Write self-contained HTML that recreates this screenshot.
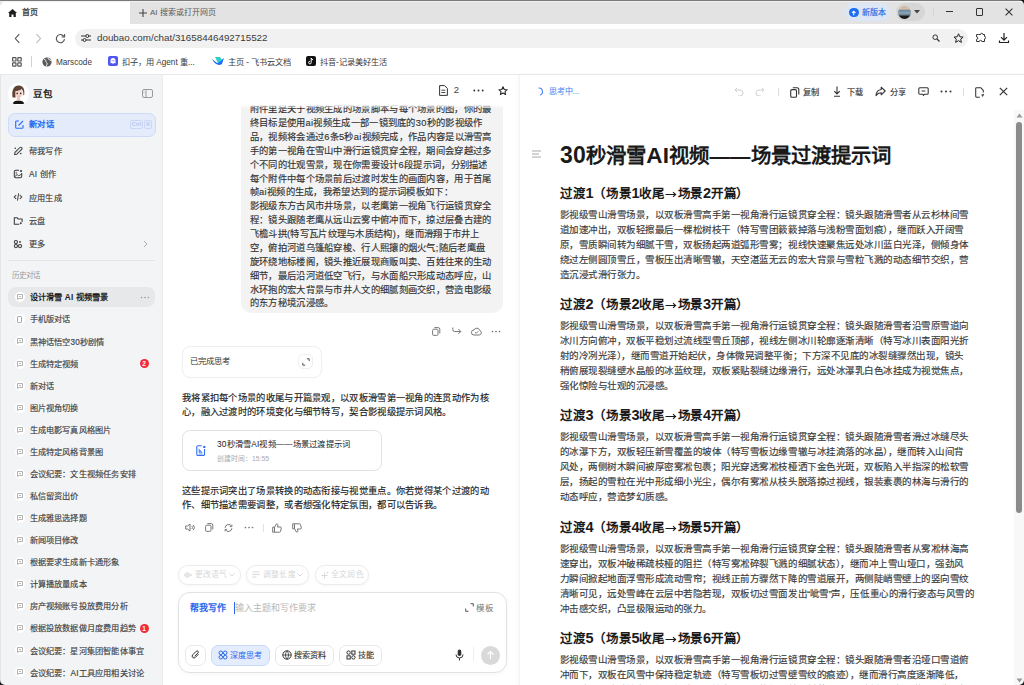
<!DOCTYPE html>
<html lang="zh-CN"><head><meta charset="utf-8">
<style>
*{box-sizing:border-box}
html,body{margin:0;padding:0}
body{width:1024px;height:685px;overflow:hidden;position:relative;background:#fff;font-family:"Liberation Sans",sans-serif;color:#1f1f1f}
.a{position:absolute}
svg{display:block}
.t{white-space:nowrap}
</style></head><body>
<!-- ============ BROWSER CHROME ============ -->
<div class="a" style="left:0;top:0;width:1024px;height:24px;background:#e3e3e3"></div><div class="a" style="left:0;top:0;width:1024px;height:1px;background:#7a7a7a"></div><div class="a" style="left:0;top:1px;width:1024px;height:1px;background:#f2f2f2"></div>
<svg class="a" style="left:1019px;top:0" width="5" height="5" viewBox="0 0 5 5"><path d="M0 0h5v5A5 5 0 0 0 0 0z" fill="#111"/></svg>
<div class="a" style="left:0;top:1.5px;width:129.5px;height:23.5px;background:#fff;border-radius:5px 0 0 0"></div>
<svg class="a" style="left:8px;top:8.5px" width="9" height="8" viewBox="0 0 9 8"><path d="M4.5 0L0 4h1.2v4h2.3V5.5h2V8h2.3V4H9z" fill="#1f1f1f"/></svg>
<div class="a t" style="left:22px;top:7px;font-size:8px;line-height:12px;color:#333;-webkit-text-stroke-width:0.25px">首页</div>
<svg class="a" style="left:138px;top:7.5px" width="10" height="10" viewBox="0 0 10 10"><path d="M5 1v8M1 5h8" stroke="#444" stroke-width="1.1"/></svg>
<div class="a t" style="left:150px;top:7px;font-size:8px;line-height:12px;color:#5a5a5a">AI 搜索或打开网页</div>
<!-- new version pill -->
<div class="a" style="left:844px;top:3px;width:46px;height:18px;border-radius:9px;background:#dde6f5"></div>
<div class="a" style="left:849px;top:7.5px;width:9.5px;height:9.5px;border-radius:50%;background:#1b6ef3"></div>
<svg class="a" style="left:849px;top:7.5px" width="9.5" height="9.5" viewBox="0 0 9.5 9.5"><path d="M4.75 7.3V3.2M3 4.9l1.75-1.7 1.75 1.7" stroke="#fff" stroke-width="1.1" fill="none"/></svg>
<div class="a t" style="left:862px;top:7px;font-size:8px;line-height:12px;color:#2d6ee6;-webkit-text-stroke-width:0.2px">新版本</div>
<div class="a" style="left:896px;top:3px;width:29px;height:18px;border-radius:9px;background:#d6d6d6"></div>
<div class="a" style="left:898.2px;top:5.8px;width:13px;height:13px;border-radius:50%;background:linear-gradient(#c7b39a 0,#d7c2a8 22%,#6f8aa0 35%,#8fa6b8 55%,#6b7f8c 68%,#1c1c1c 80%,#141414 100%)"></div>
<svg class="a" style="left:914px;top:10px" width="6" height="4" viewBox="0 0 6 4"><path d="M0 0h6L3 3.5z" fill="#444"/></svg>
<div class="a" style="left:933px;top:8px;width:1px;height:9px;background:#d6d6d6"></div>
<div class="a" style="left:945.5px;top:10.8px;width:7.5px;height:1.1px;background:#333"></div>
<div class="a" style="left:975.5px;top:8px;width:7.8px;height:7.5px;border:1.1px solid #333;border-radius:1px"></div>
<svg class="a" style="left:1005px;top:7.5px" width="8" height="8" viewBox="0 0 8 8"><path d="M.6.6l6.8 6.8M7.4.6L.6 7.4" stroke="#333" stroke-width="1.1"/></svg>

<!-- address row -->
<svg class="a" style="left:14px;top:33px" width="7" height="11" viewBox="0 0 7 11"><path d="M5.3 1.2L1.3 5.5l4 4.3" stroke="#555" stroke-width="1.1" fill="none"/></svg>
<svg class="a" style="left:35px;top:33px" width="7" height="11" viewBox="0 0 7 11"><path d="M1.5 1.2l4 4.3-4 4.3" stroke="#b8b8b8" stroke-width="1.1" fill="none"/></svg>
<svg class="a" style="left:54.5px;top:33px" width="11" height="11" viewBox="0 0 11 11"><path d="M9 3.6A4.1 4.1 0 1 0 9.5 6.2" stroke="#555" stroke-width="1.15" fill="none"/><path d="M9.6 1v3H6.6" stroke="#555" stroke-width="1.1" fill="none"/></svg>
<div class="a" style="left:75px;top:29px;width:893px;height:19px;border-radius:10px;background:#f1f1f1"></div>
<svg class="a" style="left:81px;top:33px" width="10" height="10" viewBox="0 0 10 10"><path d="M0 3h10M0 7h10" stroke="#333" stroke-width="1"/><circle cx="6.3" cy="3" r="1.5" fill="#f1f1f1" stroke="#333"/><circle cx="3.5" cy="7" r="1.5" fill="#f1f1f1" stroke="#333"/></svg>
<div class="a t" style="left:97px;top:31.2px;font-size:9.8px;line-height:13px;color:#3a3a3a">doubao.com/chat/31658446492715522</div>
<svg class="a" style="left:932px;top:34px" width="8" height="8" viewBox="0 0 8 8"><circle cx="3.2" cy="3.2" r="2.3" stroke="#333" stroke-width="1" fill="none"/><path d="M5 5l2.5 2.5" stroke="#333" stroke-width="1.2"/></svg>
<svg class="a" style="left:953px;top:33px" width="11" height="11" viewBox="0 0 11 11"><path d="M5.5 0.8l1.4 3 3.2.3-2.4 2.1.7 3.2-2.9-1.7-2.9 1.7.7-3.2L1 4.1l3.2-.3z" stroke="#222" stroke-width="1" fill="none" stroke-linejoin="round"/></svg>
<svg class="a" style="left:975px;top:32px" width="11" height="11" viewBox="0 0 11 11"><path d="M3.5 2.5h2a1.2 1.2 0 0 1 2.4 0h1.6v2a1.2 1.2 0 0 1 0 2.4v2.6H6.8a1.2 1.2 0 0 0-2.4 0H1.6V7.3a1.2 1.2 0 0 0 0-2.4V2.5z" stroke="#333" stroke-width="1" fill="none"/></svg>
<svg class="a" style="left:998px;top:32px" width="12" height="12" viewBox="0 0 12 12"><path d="M6 1v7M3 5.2L6 8.2l3-3M1.5 8.5v2h9v-2" stroke="#222" stroke-width="1.2" fill="none"/></svg>

<!-- bookmarks -->
<svg class="a" style="left:12px;top:57px" width="10" height="10" viewBox="0 0 10 10"><rect x="0.6" y="0.6" width="3.4" height="3.4" rx=".6" stroke="#555" stroke-width="1.2" fill="none"/><rect x="5.8" y="0.6" width="3.4" height="3.4" rx=".6" stroke="#555" stroke-width="1.2" fill="none"/><rect x="0.6" y="5.8" width="3.4" height="3.4" rx=".6" stroke="#555" stroke-width="1.2" fill="none"/><rect x="5.8" y="5.8" width="3.4" height="3.4" rx=".6" stroke="#555" stroke-width="1.2" fill="none"/></svg>
<div class="a" style="left:31px;top:56px;width:1px;height:11px;background:#c5d3ea"></div>
<svg class="a" style="left:42px;top:56.5px" width="10" height="10" viewBox="0 0 10 10"><circle cx="5" cy="5" r="4.6" fill="#5a5a5a"/><path d="M2 2.2c1.2.2 2 1 1.8 2-.2.8 1 1.2 1.3 2 .2.8-.3 1.8-.8 2.6M6.2 1c-.2.8.3 1.5 1.1 1.6.8.1 1.5.6 1.6 1.3" stroke="#fff" stroke-width="1" fill="none"/></svg>
<div class="a t" style="left:56px;top:56px;font-size:8.2px;line-height:13px;color:#3a3a3a">Marscode</div>
<div class="a" style="left:108px;top:56px;width:10px;height:10px;border-radius:2px;background:#4f55f0"></div><svg class="a" style="left:108px;top:56px" width="10" height="10" viewBox="0 0 10 10"><path d="M2.5 7.5V4.5a2.5 2.5 0 0 1 5 0v3l-1-.6-1.5.8-1.5-.8z" fill="#fff"/><circle cx="4.2" cy="4.8" r=".5" fill="#4f55f0"/><circle cx="5.8" cy="4.8" r=".5" fill="#4f55f0"/></svg>
<div class="a t" style="left:122px;top:56px;font-size:8.2px;line-height:13px;color:#3a3a3a">扣子，用 Agent 重...</div>
<svg class="a" style="left:212px;top:57px" width="12" height="9" viewBox="0 0 12 9"><path d="M0 2l5 4 7-5-2 6c-3 2-7 1-10-5z" fill="#1e6fff"/><path d="M3 0h5l2 3-4 3z" fill="#2dd1c4"/></svg>
<div class="a t" style="left:228px;top:56px;font-size:8.2px;line-height:13px;color:#3a3a3a">主页 - 飞书云文档</div>
<div class="a" style="left:306px;top:56px;width:10px;height:10px;border-radius:2px;background:#111"></div><svg class="a" style="left:306px;top:56px" width="10" height="10" viewBox="0 0 10 10"><path d="M5.2 2v4.6a1.3 1.3 0 1 1-1.3-1.3M5.2 2c.2 1 .9 1.6 1.9 1.7" stroke="#fff" stroke-width="1" fill="none"/></svg>
<div class="a t" style="left:320px;top:56px;font-size:8.2px;line-height:13px;color:#3a3a3a">抖音-记录美好生活</div>
<div class="a" style="left:0;top:73.5px;width:1024px;height:1.2px;background:#e8e8e8"></div>


<!-- ============ SIDEBAR ============ -->
<div class="a" style="left:0;top:74.7px;width:163px;height:611px;background:#f3f4f6;border-left:1px solid #e4e4e4;border-right:1px solid #ececee"></div>
<div class="a" style="left:7.7px;top:82.7px;width:21px;height:22px;border-radius:50%;background:#fff;overflow:hidden">
 <svg width="21" height="22" viewBox="0 0 21 22"><path d="M4.5 21c.5-2.5 3-3.6 6-3.6s5.4 1.1 6 3.6z" fill="#161616"/><rect x="9" y="13" width="3" height="4.5" fill="#efc4b6"/><ellipse cx="10.8" cy="10" rx="3.9" ry="4.9" fill="#f6d6ca"/><path d="M4.6 14.5C3.6 8 5 2.6 10.6 2.4c4.6-.1 6.4 3.5 5.6 9.5l-.9.4c.3-2.8-.2-5-1.6-6.3-2 1.4-4.5 2-6.2 2-.4 2.4-.2 4.8.2 6.6z" fill="#5e4236"/><ellipse cx="9.2" cy="10.4" rx=".75" ry=".9" fill="#2a2a2a"/><ellipse cx="12.6" cy="10.4" rx=".75" ry=".9" fill="#2a2a2a"/><path d="M10.2 13.2h1.3" stroke="#e48d8d" stroke-width=".8"/></svg>
</div>
<div class="a t" style="left:33px;top:87px;font-size:9.5px;line-height:13px;font-weight:bold;color:#1f1f1f">豆包</div>
<svg class="a" style="left:142px;top:89px" width="11" height="9" viewBox="0 0 11 9"><rect x="0.5" y="0.5" width="10" height="8" rx="1.5" stroke="#9a9a9a" fill="none"/><path d="M4 0.5v8" stroke="#9a9a9a"/><path d="M2 2.5v2" stroke="#c0c0c0"/></svg>
<div class="a" style="left:8px;top:113px;width:148px;height:24px;border-radius:7px;background:#e4ebfa;border:1px solid #cddbf8"></div>
<svg class="a" style="left:14.5px;top:120px" width="9" height="9" viewBox="0 0 9 9"><path d="M4 1H1.5a.8.8 0 0 0-.8.8v5.7c0 .4.4.8.8.8h5.7c.4 0 .8-.4.8-.8V5" stroke="#2c6bf2" stroke-width="1.1" fill="none"/><path d="M3.5 5.5L8 1" stroke="#2c6bf2" stroke-width="1.1"/></svg>
<div class="a t" style="left:29px;top:118px;font-size:8.4px;letter-spacing:0.4px;line-height:13px;font-weight:bold;color:#2a66ee">新对话</div>
<div class="a" style="left:130.2px;top:120.3px;width:12.8px;height:8.3px;border:1px solid #c9d8f6;border-radius:2px;font-size:5.5px;line-height:6.3px;color:#b3c8f3;text-align:center;font-weight:bold">Ctrl</div>
<div class="a" style="left:144.3px;top:120.3px;width:7.7px;height:8.3px;border:1px solid #c9d8f6;border-radius:2px;font-size:5.5px;line-height:6.3px;color:#b3c8f3;text-align:center;font-weight:bold">K</div>
<svg class="a" style="left:12px;top:144.8px" width="12" height="12" viewBox="0 0 12 12"><path d="M2.6 9.6l.4-2.2 4.9-4.9a1.1 1.1 0 0 1 1.6 0l.2.2a1.1 1.1 0 0 1 0 1.6L4.8 9.2z" stroke="#3a3a3a" stroke-width="1.05" fill="none" stroke-linejoin="round"/><circle cx="3.3" cy="3.3" r=".8" fill="#3a3a3a"/><circle cx="8.8" cy="8.6" r=".8" fill="#3a3a3a"/></svg>
<svg class="a" style="left:12px;top:168.0px" width="12" height="12" viewBox="0 0 12 12"><path d="M7 2.3H3.8a1.5 1.5 0 0 0-1.5 1.5v4.4a1.5 1.5 0 0 0 1.5 1.5h4.4a1.5 1.5 0 0 0 1.5-1.5V5" stroke="#3a3a3a" stroke-width="1.05" fill="none"/><path d="M2.8 8.6l2.4-2 1.6 1.2 2.6-1.6" stroke="#3a3a3a" stroke-width=".9" fill="none"/><path d="M4.2 3.8v2.4" stroke="#3a3a3a" stroke-width=".8"/><circle cx="9" cy="3" r="1.1" fill="#3a3a3a"/></svg>
<svg class="a" style="left:12px;top:191.3px" width="12" height="12" viewBox="0 0 12 12"><path d="M4.2 4L2.3 6l1.9 2M7.8 4l1.9 2-1.9 2" stroke="#3a3a3a" stroke-width="1.05" fill="none"/><path d="M6.6 2.4L5.5 9.6" stroke="#3a3a3a" stroke-width="1"/></svg>
<svg class="a" style="left:12px;top:214.5px" width="12" height="12" viewBox="0 0 12 12"><path d="M7.2 9.3H2.3V2.8h2.9l1 1.1h3.9v3.2" stroke="#3a3a3a" stroke-width="1.05" fill="none" stroke-linejoin="round"/><path d="M8.8 7.1l1.2 1.2-1.2 1.2-1.2-1.2z" fill="#3a3a3a"/></svg>
<svg class="a" style="left:12px;top:238.0px" width="12" height="12" viewBox="0 0 12 12"><circle cx="3.9" cy="4.1" r="1.6" stroke="#3a3a3a" stroke-width="1.05" fill="none"/><circle cx="3.9" cy="8.1" r="1.6" stroke="#3a3a3a" stroke-width="1.05" fill="none"/><circle cx="8" cy="8.1" r="1.6" stroke="#3a3a3a" stroke-width="1.05" fill="none"/><circle cx="8" cy="3.9" r=".95" fill="#3a3a3a"/></svg>
<div class="a t" style="left:29px;top:145.00px;font-size:8.2px;letter-spacing:0.2px;line-height:13px;color:#404040;-webkit-text-stroke-width:0.15px">帮我写作</div>
<div class="a t" style="left:29px;top:168.00px;font-size:8.2px;letter-spacing:0.2px;line-height:13px;color:#404040;-webkit-text-stroke-width:0.15px">AI 创作</div>
<div class="a t" style="left:29px;top:191.50px;font-size:8.2px;letter-spacing:0.2px;line-height:13px;color:#404040;-webkit-text-stroke-width:0.15px">应用生成</div>
<div class="a t" style="left:29px;top:214.50px;font-size:8.2px;letter-spacing:0.2px;line-height:13px;color:#404040;-webkit-text-stroke-width:0.15px">云盘</div>
<div class="a t" style="left:29px;top:238.10px;font-size:8.2px;letter-spacing:0.2px;line-height:13px;color:#404040;-webkit-text-stroke-width:0.15px">更多</div>
<svg class="a" style="left:143px;top:240px" width="5" height="8" viewBox="0 0 5 8"><path d="M1 1l3 3-3 3" stroke="#aaa" stroke-width="1" fill="none"/></svg>
<div class="a" style="left:8px;top:259.5px;width:147px;height:1px;background:#e3e4e7"></div>
<div class="a t" style="left:12px;top:270px;font-size:7.5px;line-height:11px;color:#9a9a9a">历史对话</div>
<div class="a" style="left:8px;top:287px;width:147px;height:20px;border-radius:8px;background:#e7e8ea"></div>
<div class="a" style="left:14.5px;top:292.30px;width:10px;height:10px;border-radius:50%;background:#fff"></div><svg class="a" style="left:16.5px;top:294.30px" width="6" height="6" viewBox="0 0 6 6"><path d="M.5.5h5v4H2L.5 5.5z" stroke="#aaa" fill="none" stroke-width=".9" stroke-linejoin="round"/><path d="M2 2.5h2" stroke="#aaa" stroke-width=".8"/></svg><div class="a t" style="left:29.5px;top:291.40px;font-size:8.2px;letter-spacing:0.2px;line-height:13px;font-weight:bold;color:#1f1f1f">设计滑雪 AI 视频雪景</div>
<div class="a" style="left:14.5px;top:314.37px;width:10px;height:10px;border-radius:50%;background:#fff"></div><svg class="a" style="left:17px;top:315.87px" width="5" height="7" viewBox="0 0 5 7"><rect x=".5" y=".5" width="4" height="6" rx=".8" stroke="#999" fill="none" stroke-width=".9"/></svg><div class="a t" style="left:29.5px;top:313.47px;font-size:8.2px;letter-spacing:0.2px;line-height:13px;color:#404040;-webkit-text-stroke-width:0.15px">手机版对话</div>
<div class="a" style="left:14.5px;top:336.44px;width:10px;height:10px;border-radius:50%;background:#fff"></div><svg class="a" style="left:16.5px;top:338.44px" width="6" height="6" viewBox="0 0 6 6"><path d="M.5.5h5v4H2L.5 5.5z" stroke="#aaa" fill="none" stroke-width=".9" stroke-linejoin="round"/><path d="M2 2.5h2" stroke="#aaa" stroke-width=".8"/></svg><div class="a t" style="left:29.5px;top:335.54px;font-size:8.2px;letter-spacing:0.2px;line-height:13px;color:#404040;-webkit-text-stroke-width:0.15px">黑神话悟空30秒剧情</div>
<div class="a" style="left:14.5px;top:358.51px;width:10px;height:10px;border-radius:50%;background:#fff"></div><svg class="a" style="left:16.5px;top:360.51px" width="6" height="6" viewBox="0 0 6 6"><path d="M.5.5h5v4H2L.5 5.5z" stroke="#aaa" fill="none" stroke-width=".9" stroke-linejoin="round"/><path d="M2 2.5h2" stroke="#aaa" stroke-width=".8"/></svg><div class="a t" style="left:29.5px;top:357.61px;font-size:8.2px;letter-spacing:0.2px;line-height:13px;color:#404040;-webkit-text-stroke-width:0.15px">生成特定视频</div>
<div class="a" style="left:14.5px;top:380.58px;width:10px;height:10px;border-radius:50%;background:#fff"></div><svg class="a" style="left:16.5px;top:382.58px" width="6" height="6" viewBox="0 0 6 6"><path d="M.5.5h5v4H2L.5 5.5z" stroke="#aaa" fill="none" stroke-width=".9" stroke-linejoin="round"/><path d="M2 2.5h2" stroke="#aaa" stroke-width=".8"/></svg><div class="a t" style="left:29.5px;top:379.68px;font-size:8.2px;letter-spacing:0.2px;line-height:13px;color:#404040;-webkit-text-stroke-width:0.15px">新对话</div>
<div class="a" style="left:14.5px;top:402.65px;width:10px;height:10px;border-radius:50%;background:#fff"></div><svg class="a" style="left:16.5px;top:404.65px" width="6" height="6" viewBox="0 0 6 6"><path d="M.5.5h5v4H2L.5 5.5z" stroke="#aaa" fill="none" stroke-width=".9" stroke-linejoin="round"/><path d="M2 2.5h2" stroke="#aaa" stroke-width=".8"/></svg><div class="a t" style="left:29.5px;top:401.75px;font-size:8.2px;letter-spacing:0.2px;line-height:13px;color:#404040;-webkit-text-stroke-width:0.15px">图片视角切换</div>
<div class="a" style="left:14.5px;top:424.72px;width:10px;height:10px;border-radius:50%;background:#fff"></div><svg class="a" style="left:16.5px;top:426.72px" width="6" height="6" viewBox="0 0 6 6"><path d="M.5.5h5v4H2L.5 5.5z" stroke="#aaa" fill="none" stroke-width=".9" stroke-linejoin="round"/><path d="M2 2.5h2" stroke="#aaa" stroke-width=".8"/></svg><div class="a t" style="left:29.5px;top:423.82px;font-size:8.2px;letter-spacing:0.2px;line-height:13px;color:#404040;-webkit-text-stroke-width:0.15px">生成电影写真风格图片</div>
<div class="a" style="left:14.5px;top:446.79px;width:10px;height:10px;border-radius:50%;background:#fff"></div><svg class="a" style="left:16.5px;top:448.79px" width="6" height="6" viewBox="0 0 6 6"><path d="M.5.5h5v4H2L.5 5.5z" stroke="#aaa" fill="none" stroke-width=".9" stroke-linejoin="round"/><path d="M2 2.5h2" stroke="#aaa" stroke-width=".8"/></svg><div class="a t" style="left:29.5px;top:445.89px;font-size:8.2px;letter-spacing:0.2px;line-height:13px;color:#404040;-webkit-text-stroke-width:0.15px">生成特定风格背景图</div>
<div class="a" style="left:14.5px;top:468.86px;width:10px;height:10px;border-radius:50%;background:#fff"></div><svg class="a" style="left:16.5px;top:470.86px" width="6" height="6" viewBox="0 0 6 6"><path d="M.5.5h5v4H2L.5 5.5z" stroke="#aaa" fill="none" stroke-width=".9" stroke-linejoin="round"/><path d="M2 2.5h2" stroke="#aaa" stroke-width=".8"/></svg><div class="a t" style="left:29.5px;top:467.96px;font-size:8.2px;letter-spacing:0.2px;line-height:13px;color:#404040;-webkit-text-stroke-width:0.15px">会议纪要：文生视频任务安排</div>
<div class="a" style="left:14.5px;top:490.93px;width:10px;height:10px;border-radius:50%;background:#fff"></div><svg class="a" style="left:16.5px;top:492.93px" width="6" height="6" viewBox="0 0 6 6"><path d="M.5.5h5v4H2L.5 5.5z" stroke="#aaa" fill="none" stroke-width=".9" stroke-linejoin="round"/><path d="M2 2.5h2" stroke="#aaa" stroke-width=".8"/></svg><div class="a t" style="left:29.5px;top:490.03px;font-size:8.2px;letter-spacing:0.2px;line-height:13px;color:#404040;-webkit-text-stroke-width:0.15px">私信留资出价</div>
<div class="a" style="left:14.5px;top:513.00px;width:10px;height:10px;border-radius:50%;background:#fff"></div><svg class="a" style="left:16.5px;top:515.00px" width="6" height="6" viewBox="0 0 6 6"><path d="M.5.5h5v4H2L.5 5.5z" stroke="#aaa" fill="none" stroke-width=".9" stroke-linejoin="round"/><path d="M2 2.5h2" stroke="#aaa" stroke-width=".8"/></svg><div class="a t" style="left:29.5px;top:512.10px;font-size:8.2px;letter-spacing:0.2px;line-height:13px;color:#404040;-webkit-text-stroke-width:0.15px">生成雅思选择题</div>
<div class="a" style="left:14.5px;top:535.07px;width:10px;height:10px;border-radius:50%;background:#fff"></div><svg class="a" style="left:16.5px;top:537.07px" width="6" height="6" viewBox="0 0 6 6"><path d="M.5.5h5v4H2L.5 5.5z" stroke="#aaa" fill="none" stroke-width=".9" stroke-linejoin="round"/><path d="M2 2.5h2" stroke="#aaa" stroke-width=".8"/></svg><div class="a t" style="left:29.5px;top:534.17px;font-size:8.2px;letter-spacing:0.2px;line-height:13px;color:#404040;-webkit-text-stroke-width:0.15px">新闻项目修改</div>
<div class="a" style="left:14.5px;top:557.14px;width:10px;height:10px;border-radius:50%;background:#fff"></div><svg class="a" style="left:16.5px;top:559.14px" width="6" height="6" viewBox="0 0 6 6"><path d="M.5.5h5v4H2L.5 5.5z" stroke="#aaa" fill="none" stroke-width=".9" stroke-linejoin="round"/><path d="M2 2.5h2" stroke="#aaa" stroke-width=".8"/></svg><div class="a t" style="left:29.5px;top:556.24px;font-size:8.2px;letter-spacing:0.2px;line-height:13px;color:#404040;-webkit-text-stroke-width:0.15px">根据要求生成新卡通形象</div>
<div class="a" style="left:14.5px;top:579.21px;width:10px;height:10px;border-radius:50%;background:#fff"></div><svg class="a" style="left:16.5px;top:581.21px" width="6" height="6" viewBox="0 0 6 6"><path d="M.5.5h5v4H2L.5 5.5z" stroke="#aaa" fill="none" stroke-width=".9" stroke-linejoin="round"/><path d="M2 2.5h2" stroke="#aaa" stroke-width=".8"/></svg><div class="a t" style="left:29.5px;top:578.31px;font-size:8.2px;letter-spacing:0.2px;line-height:13px;color:#404040;-webkit-text-stroke-width:0.15px">计算播放量成本</div>
<div class="a" style="left:14.5px;top:601.28px;width:10px;height:10px;border-radius:50%;background:#fff"></div><svg class="a" style="left:16.5px;top:603.28px" width="6" height="6" viewBox="0 0 6 6"><path d="M.5.5h5v4H2L.5 5.5z" stroke="#aaa" fill="none" stroke-width=".9" stroke-linejoin="round"/><path d="M2 2.5h2" stroke="#aaa" stroke-width=".8"/></svg><div class="a t" style="left:29.5px;top:600.38px;font-size:8.2px;letter-spacing:0.2px;line-height:13px;color:#404040;-webkit-text-stroke-width:0.15px">房产视频账号投放费用分析</div>
<div class="a" style="left:14.5px;top:623.35px;width:10px;height:10px;border-radius:50%;background:#fff"></div><svg class="a" style="left:16.5px;top:625.35px" width="6" height="6" viewBox="0 0 6 6"><path d="M.5.5h5v4H2L.5 5.5z" stroke="#aaa" fill="none" stroke-width=".9" stroke-linejoin="round"/><path d="M2 2.5h2" stroke="#aaa" stroke-width=".8"/></svg><div class="a t" style="left:29.5px;top:622.45px;font-size:8.2px;letter-spacing:0.2px;line-height:13px;color:#404040;-webkit-text-stroke-width:0.15px">根据投放数据做月度费用趋势</div>
<div class="a" style="left:14.5px;top:645.42px;width:10px;height:10px;border-radius:50%;background:#fff"></div><svg class="a" style="left:16.5px;top:647.42px" width="6" height="6" viewBox="0 0 6 6"><path d="M.5.5h5v4H2L.5 5.5z" stroke="#aaa" fill="none" stroke-width=".9" stroke-linejoin="round"/><path d="M2 2.5h2" stroke="#aaa" stroke-width=".8"/></svg><div class="a t" style="left:29.5px;top:644.52px;font-size:8.2px;letter-spacing:0.2px;line-height:13px;color:#404040;-webkit-text-stroke-width:0.15px">会议纪要：星河集团智能体事宜</div>
<div class="a" style="left:14.5px;top:667.49px;width:10px;height:10px;border-radius:50%;background:#fff"></div><svg class="a" style="left:16.5px;top:669.49px" width="6" height="6" viewBox="0 0 6 6"><path d="M.5.5h5v4H2L.5 5.5z" stroke="#aaa" fill="none" stroke-width=".9" stroke-linejoin="round"/><path d="M2 2.5h2" stroke="#aaa" stroke-width=".8"/></svg><div class="a t" style="left:29.5px;top:666.59px;font-size:8.2px;letter-spacing:0.2px;line-height:13px;color:#404040;-webkit-text-stroke-width:0.15px">会议纪要：AI工具应用相关讨论</div>
<svg class="a" style="left:139.5px;top:295.8px" width="10" height="3" viewBox="0 0 10 3"><circle cx="1.6" cy="1.5" r=".8" fill="#999"/><circle cx="5" cy="1.5" r=".8" fill="#999"/><circle cx="8.4" cy="1.5" r=".8" fill="#999"/></svg>
<div class="a" style="left:139.5px;top:358.7px;width:9px;height:9px;border-radius:50%;background:#f42a35;color:#fff;font-size:6.5px;line-height:9px;text-align:center;font-weight:bold">2</div>
<div class="a" style="left:139.5px;top:624.0px;width:9px;height:9px;border-radius:50%;background:#f42a35;color:#fff;font-size:6.5px;line-height:9px;text-align:center;font-weight:bold">1</div>


<!-- ============ MIDDLE CHAT ============ -->
<div class="a" style="left:241.3px;top:98px;width:261.3px;height:215px;border-radius:10px;background:#f3f3f3"></div>
<div class="a t" style="left:249.8px;top:102.10px;font-size:9.3px;letter-spacing:0.3px;line-height:14px;color:#333;-webkit-text-stroke-width:0.15px">附件里是关于视频生成的场景脚本与每个场景的图，你的最</div>
<div class="a t" style="left:249.8px;top:115.98px;font-size:9.3px;letter-spacing:0.3px;line-height:14px;color:#333;-webkit-text-stroke-width:0.15px">终目标是使用ai视频生成一部一镜到底的30秒的影视级作</div>
<div class="a t" style="left:249.8px;top:129.86px;font-size:9.3px;letter-spacing:0.3px;line-height:14px;color:#333;-webkit-text-stroke-width:0.15px">品，视频将会通过6条5秒ai视频完成，作品内容是以滑雪高</div>
<div class="a t" style="left:249.8px;top:143.74px;font-size:9.3px;letter-spacing:0.3px;line-height:14px;color:#333;-webkit-text-stroke-width:0.15px">手的第一视角在雪山中滑行运镜贯穿全程，期间会穿越过多</div>
<div class="a t" style="left:249.8px;top:157.62px;font-size:9.3px;letter-spacing:0.3px;line-height:14px;color:#333;-webkit-text-stroke-width:0.15px">个不同的壮观雪景，现在你需要设计6段提示词，分别描述</div>
<div class="a t" style="left:249.8px;top:171.50px;font-size:9.3px;letter-spacing:0.3px;line-height:14px;color:#333;-webkit-text-stroke-width:0.15px">每个附件中每个场景前后过渡时发生的画面内容，用于首尾</div>
<div class="a t" style="left:249.8px;top:185.38px;font-size:9.3px;letter-spacing:0.3px;line-height:14px;color:#333;-webkit-text-stroke-width:0.15px">帧ai视频的生成，我希望达到的提示词模板如下：</div>
<div class="a t" style="left:249.8px;top:199.26px;font-size:9.3px;letter-spacing:0.3px;line-height:14px;color:#333;-webkit-text-stroke-width:0.15px">影视级东方古风市井场景，以老鹰第一视角飞行运镜贯穿全</div>
<div class="a t" style="left:249.8px;top:213.14px;font-size:9.3px;letter-spacing:0.3px;line-height:14px;color:#333;-webkit-text-stroke-width:0.15px">程：镜头跟随老鹰从远山云雾中俯冲而下，掠过层叠古建的</div>
<div class="a t" style="left:249.8px;top:227.02px;font-size:9.3px;letter-spacing:0.3px;line-height:14px;color:#333;-webkit-text-stroke-width:0.15px">飞檐斗拱(特写瓦片纹理与木质结构)，继而滑翔于市井上</div>
<div class="a t" style="left:249.8px;top:240.90px;font-size:9.3px;letter-spacing:0.3px;line-height:14px;color:#333;-webkit-text-stroke-width:0.15px">空，俯拍河道乌篷船穿梭、行人熙攘的烟火气;随后老鹰盘</div>
<div class="a t" style="left:249.8px;top:254.78px;font-size:9.3px;letter-spacing:0.3px;line-height:14px;color:#333;-webkit-text-stroke-width:0.15px">旋环绕地标楼阁，镜头推近展现商贩叫卖、百姓往来的生动</div>
<div class="a t" style="left:249.8px;top:268.66px;font-size:9.3px;letter-spacing:0.3px;line-height:14px;color:#333;-webkit-text-stroke-width:0.15px">细节，最后沿河道低空飞行，与水面船只形成动态呼应，山</div>
<div class="a t" style="left:249.8px;top:282.54px;font-size:9.3px;letter-spacing:0.3px;line-height:14px;color:#333;-webkit-text-stroke-width:0.15px">水环抱的宏大背景与市井人文的细腻刻画交织，营造电影级</div>
<div class="a t" style="left:249.8px;top:296.42px;font-size:9.3px;letter-spacing:0.3px;line-height:14px;color:#333;-webkit-text-stroke-width:0.15px">的东方秘境沉浸感。</div>
<div class="a" style="left:163px;top:74.7px;width:356px;height:30.3px;background:#fff"></div>
<div class="a" style="left:163px;top:105px;width:356px;height:3px;background:linear-gradient(#fff,rgba(255,255,255,0))"></div>
<svg class="a" style="left:439px;top:85px" width="9" height="11" viewBox="0 0 9 11"><path d="M.6.6h5l2.8 2.8v7H.6z" stroke="#333" stroke-width="1" fill="none" stroke-linejoin="round"/><path d="M2.3 5.2h4M2.3 7.5h4" stroke="#333" stroke-width=".9"/></svg>
<div class="a t" style="left:453.8px;top:84.2px;font-size:9.5px;line-height:12px;color:#444">2</div>
<svg class="a" style="left:473px;top:89px" width="11" height="3" viewBox="0 0 11 3"><circle cx="1.3" cy="1.5" r=".95" fill="#333"/><circle cx="5.5" cy="1.5" r=".95" fill="#333"/><circle cx="9.7" cy="1.5" r=".95" fill="#333"/></svg>
<svg class="a" style="left:498px;top:85.5px" width="10" height="10" viewBox="0 0 11 11"><path d="M5.5 0.8l1.4 3 3.2.3-2.4 2.1.7 3.2-2.9-1.7-2.9 1.7.7-3.2L1 4.1l3.2-.3z" stroke="#222" stroke-width="1.15" fill="none" stroke-linejoin="round"/></svg>
<svg class="a" style="left:432px;top:327px" width="9" height="9" viewBox="0 0 9 9"><rect x=".6" y="2.2" width="5.4" height="6.2" rx="1.2" stroke="#777" stroke-width="1" fill="none"/><path d="M2.4 .6h3.8a1.6 1.6 0 0 1 1.6 1.6v4.2" stroke="#777" stroke-width="1" fill="none"/></svg>
<svg class="a" style="left:451.5px;top:327.3px" width="10" height="8" viewBox="0 0 10 8"><path d="M.8.5v2.3A1.7 1.7 0 0 0 2.5 4.5h6.2M6.3 2l2.5 2.5L6.3 7" stroke="#777" stroke-width="1" fill="none"/></svg>
<svg class="a" style="left:470.5px;top:326.5px" width="11" height="9" viewBox="0 0 11 9"><path d="M2.8 8h5.4a2.3 2.3 0 0 0 .5-4.5A3 3 0 0 0 3 3 2.5 2.5 0 0 0 2.8 8z" stroke="#777" stroke-width="1" fill="none"/><path d="M4 5.2l1.2 1.1 2-2" stroke="#777" stroke-width="1" fill="none"/></svg>
<svg class="a" style="left:491px;top:330px" width="10" height="3" viewBox="0 0 10 3"><circle cx="1.5" cy="1.5" r=".85" fill="#777"/><circle cx="5" cy="1.5" r=".85" fill="#777"/><circle cx="8.5" cy="1.5" r=".85" fill="#777"/></svg>
<div class="a" style="left:182.3px;top:346.4px;width:139.4px;height:31.2px;border-radius:8px;border:1px solid #eeeeee;background:#fff"></div>
<div class="a t" style="left:190px;top:354.5px;font-size:8.3px;letter-spacing:0px;line-height:13px;color:#333">已完成思考</div>
<div class="a" style="left:298px;top:354px;width:15px;height:15px;border-radius:5px;border:1px solid #efefef;background:#fff"></div>
<svg class="a" style="left:301.5px;top:357.5px" width="8" height="8" viewBox="0 0 8 8"><path d="M4.8.8h2.4v2.4M3.2 7.2H.8V4.8" stroke="#555" stroke-width="1" fill="none"/></svg>
<div class="a t" style="left:182px;top:390.70px;font-size:9.3px;letter-spacing:0.3px;line-height:14px;color:#222;-webkit-text-stroke-width:0.15px">我将紧扣每个场景的收尾与开篇景观，以双板滑雪第一视角的连贯动作为核</div>
<div class="a t" style="left:182px;top:405.20px;font-size:9.3px;letter-spacing:0.3px;line-height:14px;color:#222;-webkit-text-stroke-width:0.15px">心，融入过渡时的环境变化与细节特写，契合影视级提示词风格。</div>
<div class="a" style="left:182.3px;top:429.6px;width:200px;height:41.6px;border-radius:8px;border:1px solid #e3e3e3;background:#fff"></div>
<svg class="a" style="left:196.3px;top:445px" width="11" height="11" viewBox="0 0 11 11"><path d="M5.8 .8H2A1.2 1.2 0 0 0 .8 2v7.3A1.2 1.2 0 0 0 2 10.5h5.3a1.2 1.2 0 0 0 1.2-1.2V4" stroke="#2f6ff5" stroke-width="1.1" fill="none"/><path d="M2.6 3.2v4.6h4.2z" fill="#5c8ff7"/><path d="M2.6 9h4" stroke="#2f6ff5" stroke-width=".8"/><circle cx="8.3" cy="1.9" r="1.2" fill="#2f6ff5"/></svg>
<div class="a t" style="left:217px;top:437.5px;font-size:8.3px;letter-spacing:0.2px;line-height:13px;color:#222">30秒滑雪AI视频——场景过渡提示词</div>
<div class="a t" style="left:217px;top:453.5px;font-size:6.8px;line-height:10px;color:#aaa">创建时间：15:55</div>
<div class="a t" style="left:182px;top:484.20px;font-size:9.3px;letter-spacing:0.3px;line-height:14px;color:#222;-webkit-text-stroke-width:0.15px">这些提示词突出了场景转换的动态衔接与视觉重点。你若觉得某个过渡的动</div>
<div class="a t" style="left:182px;top:498.10px;font-size:9.3px;letter-spacing:0.3px;line-height:14px;color:#222;-webkit-text-stroke-width:0.15px">作、细节描述需要调整，或者想强化特定氛围，都可以告诉我。</div>
<svg class="a" style="left:184.5px;top:523px" width="10" height="9" viewBox="0 0 10 9"><path d="M.7 3h1.8L5 1v7L2.5 6H.7z" stroke="#777" fill="none" stroke-linejoin="round"/><path d="M6.8 3a2 2 0 0 1 0 3M8.2 1.8a3.8 3.8 0 0 1 0 5.4" stroke="#777" fill="none"/></svg>
<svg class="a" style="left:205px;top:523px" width="9" height="9" viewBox="0 0 9 9"><rect x=".6" y="2.2" width="5.4" height="6.2" rx="1.2" stroke="#777" stroke-width="1" fill="none"/><path d="M2.4 .6h3.8a1.6 1.6 0 0 1 1.6 1.6v4.2" stroke="#777" stroke-width="1" fill="none"/></svg>
<svg class="a" style="left:224px;top:522.5px" width="9" height="10" viewBox="0 0 9 10"><path d="M7.9 5.2A3.5 3.5 0 0 1 1.3 6.6M1.1 4.8A3.5 3.5 0 0 1 7.7 3.4" stroke="#777" fill="none"/><path d="M7.9 1.6v2H5.9M1.1 8.4v-2h2" stroke="#777" fill="none" stroke-width=".9"/></svg>
<svg class="a" style="left:243.5px;top:526px" width="10" height="3" viewBox="0 0 10 3"><circle cx="1.5" cy="1.5" r=".85" fill="#777"/><circle cx="5" cy="1.5" r=".85" fill="#777"/><circle cx="8.5" cy="1.5" r=".85" fill="#777"/></svg>
<div class="a" style="left:262.5px;top:523.5px;width:1px;height:8px;background:#e2e2e2"></div>
<svg class="a" style="left:272px;top:522.5px" width="10" height="10" viewBox="0 0 10 10"><path d="M.7 4.2h1.8v5H.7zM2.5 4.2L4.6.8c.9 0 1.4.6 1.2 1.5L5.4 4h3c.6 0 1 .5.9 1.1l-.8 3.3c-.1.5-.5.8-1 .8H2.5" stroke="#777" fill="none" stroke-linejoin="round"/></svg>
<svg class="a" style="left:292px;top:522.5px" width="10" height="10" viewBox="0 0 10 10"><path d="M.7 5.8h1.8V.8H.7zM2.5 5.8L4.6 9.2c.9 0 1.4-.6 1.2-1.5L5.4 6h3c.6 0 1-.5.9-1.1L8.5 1.6C8.4 1.1 8 .8 7.5.8H2.5" stroke="#777" fill="none" stroke-linejoin="round"/></svg>
<div class="a" style="left:163px;top:540px;width:356px;height:145px;background:linear-gradient(rgba(255,255,255,0),#fff 16px)"></div>
<div class="a" style="left:178.2px;top:565px;width:63px;height:20px;border-radius:10px;border:1px solid #ececec;background:#fff;box-shadow:0 1px 3px rgba(0,0,0,0.04)"></div>
<svg class="a" style="left:184px;top:571px" width="8" height="8" viewBox="0 0 8 8"><path d="M1 2.5v3M3 1v6M5 2v4M7 3v2" stroke="#d8d8d8" stroke-width="1.3"/></svg>
<div class="a t" style="left:194.5px;top:568.5px;font-size:7.8px;letter-spacing:0.2px;line-height:12px;color:#d6d6d6">更改语气</div>
<svg class="a" style="left:229px;top:573px" width="6" height="4" viewBox="0 0 6 4"><path d="M.5.5L3 3 5.5.5" stroke="#d8d8d8" fill="none"/></svg>
<div class="a" style="left:245.8px;top:565px;width:63.7px;height:20px;border-radius:10px;border:1px solid #ececec;background:#fff;box-shadow:0 1px 3px rgba(0,0,0,0.04)"></div>
<svg class="a" style="left:252px;top:571px" width="8" height="8" viewBox="0 0 8 8"><path d="M.5 1h7M.5 3.5h7M.5 6h4" stroke="#d8d8d8" stroke-width="1"/></svg>
<div class="a t" style="left:263px;top:568.5px;font-size:7.8px;letter-spacing:0.2px;line-height:12px;color:#d6d6d6">调整长度</div>
<svg class="a" style="left:297px;top:573px" width="6" height="4" viewBox="0 0 6 4"><path d="M.5.5L3 3 5.5.5" stroke="#d8d8d8" fill="none"/></svg>
<div class="a" style="left:314.7px;top:565px;width:54px;height:20px;border-radius:10px;border:1px solid #ececec;background:#fff;box-shadow:0 1px 3px rgba(0,0,0,0.04)"></div>
<svg class="a" style="left:321px;top:570.5px" width="8" height="8" viewBox="0 0 8 8"><path d="M3.5 1.5v6M.5 4.5h6" stroke="#d8d8d8" stroke-width="1"/><path d="M6.5 .5v2M5.5 1.5h2" stroke="#d8d8d8" stroke-width=".8"/></svg>
<div class="a t" style="left:331px;top:568.5px;font-size:7.8px;letter-spacing:0.2px;line-height:12px;color:#d6d6d6">全文润色</div>
<div class="a" style="left:178.2px;top:592px;width:329.3px;height:81.4px;border-radius:12px;border:1px solid #e2e2e2;background:#fff;box-shadow:0 1px 4px rgba(0,0,0,0.04)"></div>
<div class="a t" style="left:190px;top:602px;font-size:9px;line-height:13px;font-weight:bold;color:#2a66ee">帮我写作</div>
<div class="a" style="left:233.5px;top:602px;width:1px;height:12px;background:#2a66ee"></div>
<div class="a t" style="left:235px;top:602px;font-size:9px;line-height:13px;color:#b8b8b8">输入主题和写作要求</div>
<svg class="a" style="left:465px;top:603px" width="9" height="9" viewBox="0 0 9 9"><path d="M5.5.7h2.8v2.8M3.5 8.3H.7V5.5" stroke="#555" stroke-width="1" fill="none"/></svg>
<div class="a t" style="left:476px;top:602px;font-size:8.5px;line-height:13px;color:#777">模板</div>
<div class="a" style="left:185px;top:644.5px;width:21px;height:21px;border-radius:7px;border:1px solid #e8e8e8;background:#fff"></div>
<svg class="a" style="left:190.5px;top:650px" width="10" height="10" viewBox="0 0 10 10"><path d="M7.5 4.2L4.3 7.4a1.8 1.8 0 0 1-2.6-2.6L5.3 1.2a1.2 1.2 0 0 1 1.7 1.7L3.6 6.3" stroke="#333" stroke-width="1" fill="none"/></svg>
<div class="a" style="left:210.7px;top:644.5px;width:59px;height:21px;border-radius:7px;border:1px solid #c9daf8;background:#e4edfd"></div>
<svg class="a" style="left:218px;top:650px" width="10" height="10" viewBox="0 0 10 10"><circle cx="2.8" cy="2.8" r="1.8" stroke="#2a66ee" fill="none"/><circle cx="7.2" cy="2.8" r="1.8" stroke="#2a66ee" fill="none"/><circle cx="2.8" cy="7.2" r="1.8" stroke="#2a66ee" fill="none"/><circle cx="7.2" cy="7.2" r="1.8" stroke="#2a66ee" fill="none"/></svg>
<div class="a t" style="left:230px;top:649px;font-size:8.1px;letter-spacing:0.1px;line-height:13px;color:#2a66ee">深度思考</div>
<div class="a" style="left:274.9px;top:644.5px;width:59px;height:21px;border-radius:7px;border:1px solid #e8e8e8;background:#fff"></div>
<svg class="a" style="left:282px;top:650px" width="10" height="10" viewBox="0 0 10 10"><circle cx="5" cy="5" r="4.2" stroke="#333" fill="none"/><path d="M.8 5h8.4M5 .8c-2 2.5-2 5.9 0 8.4M5 .8c2 2.5 2 5.9 0 8.4" stroke="#333" stroke-width=".8" fill="none"/></svg>
<div class="a t" style="left:294px;top:649px;font-size:8.1px;letter-spacing:0.1px;line-height:13px;color:#333;-webkit-text-stroke-width:0.12px">搜索资料</div>
<div class="a" style="left:339px;top:644.5px;width:42.6px;height:21px;border-radius:7px;border:1px solid #e8e8e8;background:#fff"></div>
<svg class="a" style="left:345.5px;top:650px" width="10" height="10" viewBox="0 0 10 10"><circle cx="2.6" cy="2.6" r="1.7" stroke="#333" fill="none"/><rect x="5.8" y="1" width="3.2" height="3.2" stroke="#333" fill="none"/><rect x="1" y="5.8" width="3.2" height="3.2" stroke="#333" fill="none"/><circle cx="7.4" cy="7.4" r="1.7" stroke="#333" fill="none"/></svg>
<div class="a t" style="left:358px;top:649px;font-size:8.1px;letter-spacing:0.1px;line-height:13px;color:#333;-webkit-text-stroke-width:0.12px">技能</div>
<svg class="a" style="left:455px;top:649px" width="9" height="12" viewBox="0 0 9 12"><rect x="2.7" y=".6" width="3.6" height="6.5" rx="1.8" fill="#333"/><path d="M1 5.5a3.5 3.5 0 0 0 7 0M4.5 9v2.4" stroke="#333" fill="none"/></svg>
<div class="a" style="left:473px;top:647px;width:1px;height:14px;background:#eee"></div>
<div class="a" style="left:481px;top:645.5px;width:19px;height:19px;border-radius:50%;background:#d9d9d9"></div>
<svg class="a" style="left:486px;top:650px" width="9" height="10" viewBox="0 0 9 10"><path d="M4.5 9V1.5M1.5 4.5l3-3 3 3" stroke="#fff" stroke-width="1.2" fill="none"/></svg>


<!-- ============ RIGHT DOC ============ -->
<div class="a" style="left:519px;top:74.7px;width:505px;height:611px;background:#fff;box-shadow:-1px 0 5px rgba(0,0,0,0.035);border-left:1px solid #f3f3f3"></div>
<div class="a" style="left:1013.5px;top:110px;width:10.5px;height:575px;background:#f8f8f8"></div>
<svg class="a" style="left:1015.5px;top:112.5px" width="7" height="5" viewBox="0 0 7 5"><path d="M3.5 0.5L6.5 4.5h-6z" fill="#9a9a9a"/></svg>
<div class="a" style="left:1016px;top:121.8px;width:6px;height:391px;border-radius:3px;background:#8b8b8b"></div>
<div class="a" style="left:520px;top:74.7px;width:493px;height:33.3px;background:#fff"></div>
<svg class="a" style="left:1015.5px;top:677.5px" width="7" height="5" viewBox="0 0 7 5"><path d="M3.5 4.5L6.5 .5h-6z" fill="#9a9a9a"/></svg>
<svg class="a" style="left:1019px;top:680px" width="5" height="5" viewBox="0 0 5 5"><path d="M5 0v5H0A5 5 0 0 0 5 0z" fill="#1a1a1a"/></svg>
<!-- header -->
<svg class="a" style="left:537px;top:87px" width="8" height="9" viewBox="0 0 8 9"><path d="M1.5 1a3.6 3.6 0 0 1 1.5 7" stroke="#4a86f7" stroke-width="1.1" fill="none"/></svg>
<div class="a t" style="left:548.5px;top:86.3px;font-size:8px;line-height:12px;color:#5b90f6;-webkit-text-stroke-width:0.15px">思考中...</div>
<svg class="a" style="left:734px;top:87px" width="10" height="9" viewBox="0 0 10 9"><path d="M3 1L1 3l2 2M1 3h5a3 3 0 0 1 0 6H4" stroke="#d0d0d0" fill="none"/></svg>
<svg class="a" style="left:755px;top:87px" width="10" height="9" viewBox="0 0 10 9"><path d="M7 1l2 2-2 2M9 3H4a3 3 0 0 0 0 6h2" stroke="#d0d0d0" fill="none"/></svg>
<div class="a" style="left:777.5px;top:87.5px;width:1px;height:8px;background:#ddd"></div>
<svg class="a" style="left:789.5px;top:86.5px" width="10" height="11" viewBox="0 0 10 11"><rect x=".7" y="2.6" width="5.8" height="7.6" rx="1.3" stroke="#333" stroke-width="1.1" fill="none"/><path d="M2.8 .7h4.2a1.8 1.8 0 0 1 1.8 1.8v5" stroke="#333" stroke-width="1.1" fill="none"/></svg>
<div class="a t" style="left:803px;top:85.5px;font-size:8.2px;letter-spacing:0.1px;line-height:13px;color:#333;-webkit-text-stroke-width:0.15px">复制</div>
<svg class="a" style="left:832px;top:86px" width="10" height="11" viewBox="0 0 10 11"><path d="M5 .5v7.5M2.2 5.2L5 8l2.8-2.8M2 10.2h6" stroke="#333" stroke-width="1.1" fill="none"/></svg>
<div class="a t" style="left:846.5px;top:85.5px;font-size:8.2px;letter-spacing:0.1px;line-height:13px;color:#333;-webkit-text-stroke-width:0.15px">下载</div>
<svg class="a" style="left:874.5px;top:86px" width="11" height="11" viewBox="0 0 11 11"><path d="M6.2 1.2l4 3.8-4 3.8V6.8C4 6.7 2.3 7.6 1 9.6 1.2 6.3 3 4 6.2 3.6z" stroke="#333" stroke-width="1.05" fill="none" stroke-linejoin="round"/></svg>
<div class="a t" style="left:889.5px;top:85.5px;font-size:8.2px;letter-spacing:0.1px;line-height:13px;color:#333;-webkit-text-stroke-width:0.15px">分享</div>
<svg class="a" style="left:918px;top:87px" width="11" height="10" viewBox="0 0 11 10"><path d="M1.8.8h7.4a1 1 0 0 1 1 1v4.4a1 1 0 0 1-1 1H6.3L5.5 8.6 4.7 7.2H1.8a1 1 0 0 1-1-1V1.8a1 1 0 0 1 1-1z" stroke="#333" stroke-width="1.05" fill="none" stroke-linejoin="round"/><path d="M3.6 4h3.8" stroke="#333" stroke-width="1"/></svg>
<svg class="a" style="left:940px;top:90px" width="12" height="3" viewBox="0 0 12 3"><circle cx="1.5" cy="1.5" r="1" fill="#333"/><circle cx="6" cy="1.5" r="1" fill="#333"/><circle cx="10.5" cy="1.5" r="1" fill="#333"/></svg>
<div class="a" style="left:962.5px;top:87.5px;width:1px;height:8px;background:#ddd"></div>
<svg class="a" style="left:975px;top:86.5px" width="10" height="11" viewBox="0 0 10 11"><path d="M4.8 10.2H1.6a.9.9 0 0 1-.9-.9V1.6a.9.9 0 0 1 .9-.9h4.1l2.6 2.7v2.2" stroke="#333" stroke-width="1.05" fill="none" stroke-linejoin="round"/><path d="M9.3 6.8L5.6 8l1.5.6.6 1.6z" fill="#333"/></svg>
<svg class="a" style="left:999px;top:87px" width="9" height="9" viewBox="0 0 9 9"><path d="M.8.8l7.4 7.4M8.2.8L.8 8.2" stroke="#333" stroke-width="1.2"/></svg>
<!-- content -->
<svg class="a" style="left:532px;top:150px" width="10" height="8" viewBox="0 0 10 8"><path d="M0 1h9M0 4h7M0 7h9" stroke="#a8a8a8" stroke-width="1.1"/></svg>
<div class="a t" style="left:560px;top:141.2px;font-size:20.4px;letter-spacing:0.15px;line-height:28px;font-weight:bold;color:#1a1a1a"><span style="font-size:23px">30</span>秒滑雪<span style="font-size:22.5px">AI</span>视频——场景过渡提示词</div>
<div class="a t" style="left:560px;top:184.3px;font-size:12.5px;letter-spacing:-0.25px;line-height:18px;font-weight:bold;color:#1a1a1a">过渡<span style="font-size:14.5px">1</span>（场景<span style="font-size:14.5px">1</span>收尾<svg style="display:inline-block;vertical-align:0px;margin:0 0.3px" width="12" height="7" viewBox="0 0 12 7"><path d="M0.5 3.5h10.3M8 1.2l2.6 2.3L8 5.8" stroke="#1a1a1a" stroke-width="1.1" fill="none"/></svg>场景<span style="font-size:14.5px">2</span>开篇）</div>
<div class="a t" style="left:559.5px;top:207.0px;font-size:9.5px;letter-spacing:-0.48px;line-height:15px;color:#3a3a3a;-webkit-text-stroke-width:0.15px">影视级雪山滑雪场景，以双板滑雪高手第一视角滑行运镜贯穿全程：镜头跟随滑雪者从云杉林间雪</div>
<div class="a t" style="left:559.5px;top:222.1px;font-size:9.5px;letter-spacing:-0.48px;line-height:15px;color:#3a3a3a;-webkit-text-stroke-width:0.15px">道加速冲出，双板轻擦最后一棵松树枝干（特写雪团簌簌掉落与浅粉雪面划痕），继而跃入开阔雪</div>
<div class="a t" style="left:559.5px;top:237.2px;font-size:9.5px;letter-spacing:-0.48px;line-height:15px;color:#3a3a3a;-webkit-text-stroke-width:0.15px">原，雪质瞬间转为细腻干雪，双板扬起两道弧形雪雾；视线快速聚焦远处冰川蓝白光泽，侧倾身体</div>
<div class="a t" style="left:559.5px;top:252.3px;font-size:9.5px;letter-spacing:-0.48px;line-height:15px;color:#3a3a3a;-webkit-text-stroke-width:0.15px">绕过左侧圆顶雪丘，雪板压出清晰雪辙，天空湛蓝无云的宏大背景与雪粒飞溅的动态细节交织，营</div>
<div class="a t" style="left:559.5px;top:267.4px;font-size:9.5px;letter-spacing:-0.48px;line-height:15px;color:#3a3a3a;-webkit-text-stroke-width:0.15px">造沉浸式滑行张力。</div>
<div class="a t" style="left:560px;top:294.9px;font-size:12.5px;letter-spacing:-0.25px;line-height:18px;font-weight:bold;color:#1a1a1a">过渡<span style="font-size:14.5px">2</span>（场景<span style="font-size:14.5px">2</span>收尾<svg style="display:inline-block;vertical-align:0px;margin:0 0.3px" width="12" height="7" viewBox="0 0 12 7"><path d="M0.5 3.5h10.3M8 1.2l2.6 2.3L8 5.8" stroke="#1a1a1a" stroke-width="1.1" fill="none"/></svg>场景<span style="font-size:14.5px">3</span>开篇）</div>
<div class="a t" style="left:559.5px;top:317.6px;font-size:9.5px;letter-spacing:-0.48px;line-height:15px;color:#3a3a3a;-webkit-text-stroke-width:0.15px">影视级雪山滑雪场景，以双板滑雪高手第一视角滑行运镜贯穿全程：镜头跟随滑雪者沿雪原雪道向</div>
<div class="a t" style="left:559.5px;top:332.7px;font-size:9.5px;letter-spacing:-0.48px;line-height:15px;color:#3a3a3a;-webkit-text-stroke-width:0.15px">冰川方向俯冲，双板平稳划过流线型雪丘顶部，视线左侧冰川轮廓逐渐清晰（特写冰川表面阳光折</div>
<div class="a t" style="left:559.5px;top:347.8px;font-size:9.5px;letter-spacing:-0.48px;line-height:15px;color:#3a3a3a;-webkit-text-stroke-width:0.15px">射的冷冽光泽），继而雪道开始起伏，身体微晃调整平衡；下方深不见底的冰裂缝骤然出现，镜头</div>
<div class="a t" style="left:559.5px;top:362.9px;font-size:9.5px;letter-spacing:-0.48px;line-height:15px;color:#3a3a3a;-webkit-text-stroke-width:0.15px">稍俯展现裂缝壁水晶般的冰蓝纹理，双板紧贴裂缝边缘滑行，远处冰瀑乳白色冰挂成为视觉焦点，</div>
<div class="a t" style="left:559.5px;top:378.0px;font-size:9.5px;letter-spacing:-0.48px;line-height:15px;color:#3a3a3a;-webkit-text-stroke-width:0.15px">强化惊险与壮观的沉浸感。</div>
<div class="a t" style="left:560px;top:405.8px;font-size:12.5px;letter-spacing:-0.25px;line-height:18px;font-weight:bold;color:#1a1a1a">过渡<span style="font-size:14.5px">3</span>（场景<span style="font-size:14.5px">3</span>收尾<svg style="display:inline-block;vertical-align:0px;margin:0 0.3px" width="12" height="7" viewBox="0 0 12 7"><path d="M0.5 3.5h10.3M8 1.2l2.6 2.3L8 5.8" stroke="#1a1a1a" stroke-width="1.1" fill="none"/></svg>场景<span style="font-size:14.5px">4</span>开篇）</div>
<div class="a t" style="left:559.5px;top:428.5px;font-size:9.5px;letter-spacing:-0.48px;line-height:15px;color:#3a3a3a;-webkit-text-stroke-width:0.15px">影视级雪山滑雪场景，以双板滑雪高手第一视角滑行运镜贯穿全程：镜头跟随滑雪者滑过冰缝尽头</div>
<div class="a t" style="left:559.5px;top:443.6px;font-size:9.5px;letter-spacing:-0.48px;line-height:15px;color:#3a3a3a;-webkit-text-stroke-width:0.15px">的冰瀑下方，双板轻压新雪覆盖的坡体（特写雪板边缘雪辙与冰挂滴落的冰晶），继而转入山间背</div>
<div class="a t" style="left:559.5px;top:458.7px;font-size:9.5px;letter-spacing:-0.48px;line-height:15px;color:#3a3a3a;-webkit-text-stroke-width:0.15px">风处，两侧树木瞬间被厚密雾凇包裹；阳光穿透雾凇枝桠洒下金色光斑，双板陷入半指深的松软雪</div>
<div class="a t" style="left:559.5px;top:473.8px;font-size:9.5px;letter-spacing:-0.48px;line-height:15px;color:#3a3a3a;-webkit-text-stroke-width:0.15px">层，扬起的雪粒在光中形成细小光尘，偶尔有雾凇从枝头脱落掠过视线，银装素裹的林海与滑行的</div>
<div class="a t" style="left:559.5px;top:488.9px;font-size:9.5px;letter-spacing:-0.48px;line-height:15px;color:#3a3a3a;-webkit-text-stroke-width:0.15px">动态呼应，营造梦幻质感。</div>
<div class="a t" style="left:560px;top:517.8px;font-size:12.5px;letter-spacing:-0.25px;line-height:18px;font-weight:bold;color:#1a1a1a">过渡<span style="font-size:14.5px">4</span>（场景<span style="font-size:14.5px">4</span>收尾<svg style="display:inline-block;vertical-align:0px;margin:0 0.3px" width="12" height="7" viewBox="0 0 12 7"><path d="M0.5 3.5h10.3M8 1.2l2.6 2.3L8 5.8" stroke="#1a1a1a" stroke-width="1.1" fill="none"/></svg>场景<span style="font-size:14.5px">5</span>开篇）</div>
<div class="a t" style="left:559.5px;top:540.5px;font-size:9.5px;letter-spacing:-0.48px;line-height:15px;color:#3a3a3a;-webkit-text-stroke-width:0.15px">影视级雪山滑雪场景，以双板滑雪高手第一视角滑行运镜贯穿全程：镜头跟随滑雪者从雾凇林海高</div>
<div class="a t" style="left:559.5px;top:555.6px;font-size:9.5px;letter-spacing:-0.48px;line-height:15px;color:#3a3a3a;-webkit-text-stroke-width:0.15px">速穿出，双板冲破稀疏枝桠的阻拦（特写雾凇碎裂飞溅的细腻状态），继而冲上雪山垭口，强劲风</div>
<div class="a t" style="left:559.5px;top:570.7px;font-size:9.5px;letter-spacing:-0.48px;line-height:15px;color:#3a3a3a;-webkit-text-stroke-width:0.15px">力瞬间掀起地面浮雪形成流动雪帘；视线正前方骤然下降的雪道展开，两侧陡峭雪壁上的竖向雪纹</div>
<div class="a t" style="left:559.5px;top:585.8px;font-size:9.5px;letter-spacing:-0.48px;line-height:15px;color:#3a3a3a;-webkit-text-stroke-width:0.15px">清晰可见，远处雪峰在云层中若隐若现，双板切过雪面发出“呲雪”声，压低重心的滑行姿态与风雪的</div>
<div class="a t" style="left:559.5px;top:600.9px;font-size:9.5px;letter-spacing:-0.48px;line-height:15px;color:#3a3a3a;-webkit-text-stroke-width:0.15px">冲击感交织，凸显极限运动的张力。</div>
<div class="a t" style="left:560px;top:629.0px;font-size:12.5px;letter-spacing:-0.25px;line-height:18px;font-weight:bold;color:#1a1a1a">过渡<span style="font-size:14.5px">5</span>（场景<span style="font-size:14.5px">5</span>收尾<svg style="display:inline-block;vertical-align:0px;margin:0 0.3px" width="12" height="7" viewBox="0 0 12 7"><path d="M0.5 3.5h10.3M8 1.2l2.6 2.3L8 5.8" stroke="#1a1a1a" stroke-width="1.1" fill="none"/></svg>场景<span style="font-size:14.5px">6</span>开篇）</div>
<div class="a t" style="left:559.5px;top:651.7px;font-size:9.5px;letter-spacing:-0.48px;line-height:15px;color:#3a3a3a;-webkit-text-stroke-width:0.15px">影视级雪山滑雪场景，以双板滑雪高手第一视角滑行运镜贯穿全程：镜头跟随滑雪者沿垭口雪道俯</div>
<div class="a t" style="left:559.5px;top:666.8px;font-size:9.5px;letter-spacing:-0.48px;line-height:15px;color:#3a3a3a;-webkit-text-stroke-width:0.15px">冲而下，双板在风雪中保持稳定轨迹（特写雪板切过雪壁雪纹的痕迹），继而滑行高度逐渐降低，</div>
<div class="a t" style="left:559.5px;top:681.9px;font-size:9.5px;letter-spacing:-0.48px;line-height:15px;color:#3a3a3a;-webkit-text-stroke-width:0.15px">周围地形从陡峭转为平缓，视线中开始出现点缀的针叶林与村落屋顶，双板在压实雪道上平稳滑行</div>

<svg class="a" style="left:0;top:680px" width="5" height="5" viewBox="0 0 5 5"><path d="M0 0v5h5A5 5 0 0 1 0 0z" fill="#1a1a1a"/></svg>
</body></html>
